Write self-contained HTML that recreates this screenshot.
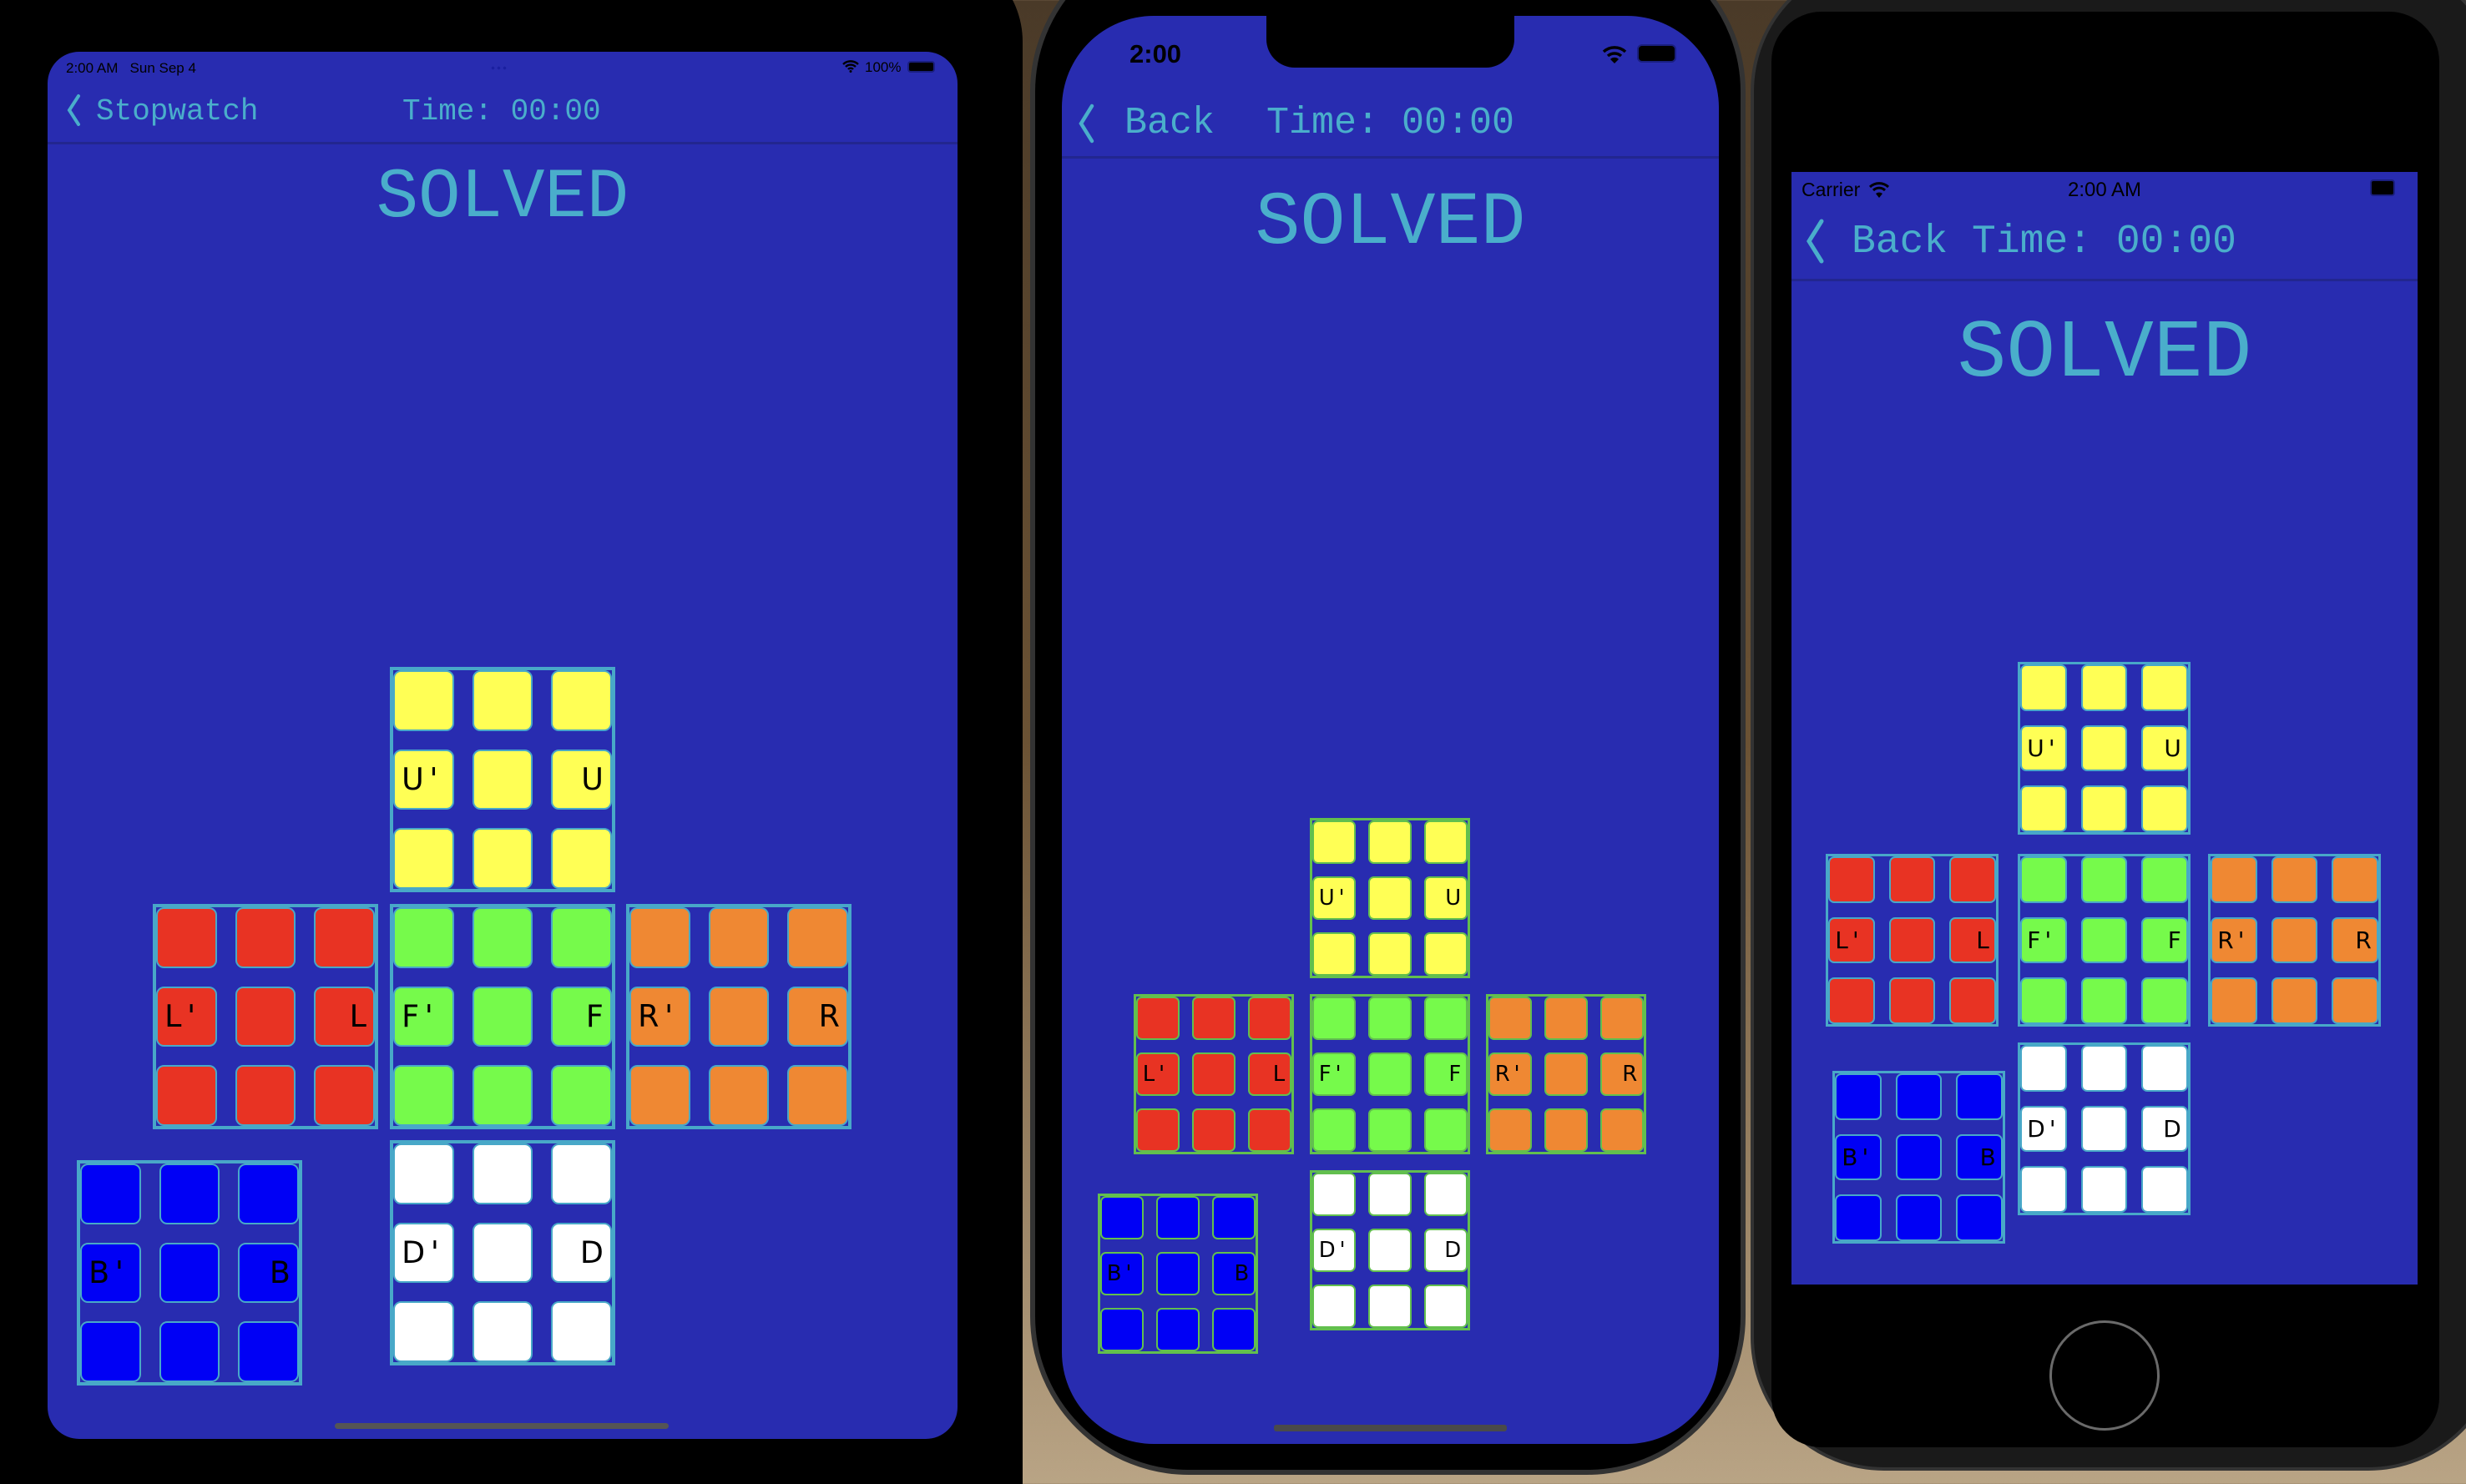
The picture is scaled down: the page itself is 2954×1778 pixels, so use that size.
<!DOCTYPE html>
<html style="overflow:hidden;width:2954px;height:1778px"><head><meta charset="utf-8"><style>
*{margin:0;padding:0;box-sizing:border-box}
body{width:2954px;height:1778px;overflow:hidden;position:relative;background:linear-gradient(180deg,#4a3a28 0%,#6b5234 50%,#b9a485 100%);font-family:"Liberation Sans",sans-serif}
.a{position:absolute}
.scr{position:absolute;background:#282cb0;overflow:hidden}
.m{font-family:"Liberation Mono",monospace;color:#4aaecb;position:absolute;white-space:pre;line-height:1}
.ln{position:absolute;left:0;right:0;height:3px;background:#22268f}
.f{position:absolute;width:var(--s);height:var(--s);border:calc(var(--s)*0.016) solid var(--b);display:grid;grid-template-columns:repeat(3,calc(var(--s)*0.27));grid-template-rows:repeat(3,calc(var(--s)*0.27));justify-content:space-between;align-content:space-between}
.f i{display:flex;align-items:center;background:var(--c);border:calc(var(--s)*0.011) solid var(--b);border-radius:calc(var(--s)*0.035);font-style:normal;font-family:"DejaVu Sans","Liberation Sans",sans-serif;font-size:calc(var(--s)*0.135);letter-spacing:calc(var(--s)*0.025);color:#000;padding:0 calc(var(--s)*0.03)}
.f i.r{justify-content:flex-end;letter-spacing:0}
.s{font-family:"Liberation Sans",sans-serif;color:#000;position:absolute;line-height:1}
</style></head><body>
<!-- iPad -->
<div class="a" style="left:-60px;top:-60px;width:1285px;height:1838px;background:#000;border-radius:0 110px 0 0"></div>
<div class="scr" style="left:57px;top:62px;width:1090px;height:1662px;border-radius:38px">
 <div class="s" style="left:22px;top:11px;font-size:17px">2:00 AM&nbsp;&nbsp;&nbsp;Sun Sep 4</div>
 <div class="a" style="left:530px;top:17px;width:20px;height:5px;background:radial-gradient(circle,#1a1fa0 40%,transparent 45%) 0 0/7px 5px"></div>
 <svg class="a" style="left:951px;top:9px" width="22" height="16" viewBox="0 0 22 16"><path d="M2 6a13 13 0 0 1 18 0M5 9a8.5 8.5 0 0 1 12 0M8 12a4 4 0 0 1 6 0" stroke="#000" stroke-width="2.4" fill="none"/><circle cx="11" cy="14.5" r="1.5"/></svg>
 <div class="s" style="left:979px;top:10px;font-size:17px">100%</div>
 <div class="a" style="left:1030px;top:11px;width:33px;height:14px;border:2px solid #1a1f80;border-radius:4px;background:#000"></div>
 <svg class="a" style="left:22px;top:50px" width="18" height="40"><path d="M15 3 4 20l11 17" stroke="#4aaecb" stroke-width="4" fill="none" stroke-linecap="round"/></svg>
 <div class="m" style="left:58px;top:54px;font-size:36px">Stopwatch</div>
 <div class="m" style="left:425px;top:54px;font-size:36px">Time: 00:00</div>
 <div class="ln" style="top:108px"></div>
 <div class="m" style="left:0;right:0;text-align:center;top:134px;font-size:84px">SOLVED</div>
 <div class="a" style="left:344px;top:1643px;width:400px;height:7px;background:#555;border-radius:4px"></div>
</div>
<!-- iPhone notch -->
<div class="a" style="left:1234px;top:-80px;width:857px;height:1847px;background:#000;border:6px solid #333;border-radius:190px"></div>
<div class="scr" style="left:1272px;top:19px;width:787px;height:1711px;border-radius:110px">
 <div class="s" style="left:81px;top:30px;font-size:31px;font-weight:bold">2:00</div>
 <div class="a" style="left:245px;top:0;width:297px;height:62px;background:#000;border-radius:0 0 34px 34px"></div>
 <svg class="a" style="left:646px;top:34px" width="32" height="24" viewBox="0 0 32 24"><path d="M3 9a19 19 0 0 1 26 0M8 14a12 12 0 0 1 16 0" stroke="#000" stroke-width="3.5" fill="none"/><path d="M11 18a7 7 0 0 1 10 0l-5 5z"/></svg>
 <div class="a" style="left:689px;top:34px;width:47px;height:22px;border:2px solid #1a1f80;border-radius:6px;background:#000"></div>
 <svg class="a" style="left:18px;top:104px" width="22" height="50"><path d="M18 4 5 25l13 21" stroke="#4aaecb" stroke-width="4.5" fill="none" stroke-linecap="round"/></svg>
 <div class="m" style="left:75px;top:106px;font-size:45px">Back</div>
 <div class="m" style="left:245px;top:106px;font-size:45px">Time: 00:00</div>
 <div class="ln" style="top:168px"></div>
 <div class="m" style="left:0;right:0;text-align:center;top:204px;font-size:90px">SOLVED</div>
 <div class="a" style="left:254px;top:1688px;width:279px;height:8px;background:#4a4a4a;border-radius:3px"></div>
</div>
<!-- iPhone 8 -->
<div class="a" style="left:2097px;top:-50px;width:900px;height:1812px;background:#1a1a1a;border:4px solid #333;border-radius:160px"></div>
<div class="a" style="left:2122px;top:14px;width:800px;height:1720px;background:#000;border-radius:60px"></div>
<div class="scr" style="left:2146px;top:206px;width:750px;height:1333px">
 <div class="s" style="left:12px;top:10px;font-size:23px">Carrier</div>
 <svg class="a" style="left:92px;top:10px" width="26" height="22" viewBox="0 0 26 22"><path d="M2 8a16 16 0 0 1 22 0M6 12a10 10 0 0 1 14 0" stroke="#000" stroke-width="3" fill="none"/><path d="M9 16a6 6 0 0 1 8 0l-4 5z"/></svg>
 <div class="s" style="left:0;right:0;text-align:center;top:10px;font-size:24px">2:00 AM</div>
 <div class="a" style="left:693px;top:9px;width:30px;height:20px;border:2px solid #1a1f80;border-radius:4px;background:#000"></div>
 <svg class="a" style="left:14px;top:55px" width="26" height="56"><path d="M22 4 7 28l15 24" stroke="#4aaecb" stroke-width="5" fill="none" stroke-linecap="round"/></svg>
 <div class="m" style="left:72px;top:60px;font-size:48px">Back Time: 00:00</div>
 <div class="ln" style="top:128px"></div>
 <div class="m" style="left:0;right:0;text-align:center;top:170px;font-size:98px">SOLVED</div>
</div>
<div class="a" style="left:2455px;top:1582px;width:132px;height:132px;border:3px solid #6a6a6a;border-radius:50%"></div>

<!-- iPad faces -->
<div class="f" style="left:467px;top:799px;--s:270px;--c:#ffff55;--b:#48a8c8"><i></i><i></i><i></i><i>U'</i><i></i><i class="r">U</i><i></i><i></i><i></i></div>
<div class="f" style="left:183px;top:1083px;--s:270px;--c:#e83323;--b:#48a8c8"><i></i><i></i><i></i><i>L'</i><i></i><i class="r">L</i><i></i><i></i><i></i></div>
<div class="f" style="left:467px;top:1083px;--s:270px;--c:#76fa4b;--b:#48a8c8"><i></i><i></i><i></i><i>F'</i><i></i><i class="r">F</i><i></i><i></i><i></i></div>
<div class="f" style="left:750px;top:1083px;--s:270px;--c:#ef8833;--b:#48a8c8"><i></i><i></i><i></i><i>R'</i><i></i><i class="r">R</i><i></i><i></i><i></i></div>
<div class="f" style="left:467px;top:1366px;--s:270px;--c:#ffffff;--b:#48a8c8"><i></i><i></i><i></i><i>D'</i><i></i><i class="r">D</i><i></i><i></i><i></i></div>
<div class="f" style="left:92px;top:1390px;--s:270px;--c:#0000f5;--b:#48a8c8"><i></i><i></i><i></i><i>B'</i><i></i><i class="r">B</i><i></i><i></i><i></i></div>
<!-- iPhone X faces -->
<div class="f" style="left:1569px;top:980px;--s:192px;--c:#ffff55;--b:#62bf4e"><i></i><i></i><i></i><i>U'</i><i></i><i class="r">U</i><i></i><i></i><i></i></div>
<div class="f" style="left:1358px;top:1191px;--s:192px;--c:#e83323;--b:#62bf4e"><i></i><i></i><i></i><i>L'</i><i></i><i class="r">L</i><i></i><i></i><i></i></div>
<div class="f" style="left:1569px;top:1191px;--s:192px;--c:#76fa4b;--b:#62bf4e"><i></i><i></i><i></i><i>F'</i><i></i><i class="r">F</i><i></i><i></i><i></i></div>
<div class="f" style="left:1780px;top:1191px;--s:192px;--c:#ef8833;--b:#62bf4e"><i></i><i></i><i></i><i>R'</i><i></i><i class="r">R</i><i></i><i></i><i></i></div>
<div class="f" style="left:1569px;top:1402px;--s:192px;--c:#ffffff;--b:#62bf4e"><i></i><i></i><i></i><i>D'</i><i></i><i class="r">D</i><i></i><i></i><i></i></div>
<div class="f" style="left:1315px;top:1430px;--s:192px;--c:#0000f5;--b:#62bf4e"><i></i><i></i><i></i><i>B'</i><i></i><i class="r">B</i><i></i><i></i><i></i></div>
<!-- iPhone 8 faces -->
<div class="f" style="left:2417px;top:793px;--s:207px;--c:#ffff55;--b:#48a8c8"><i></i><i></i><i></i><i>U'</i><i></i><i class="r">U</i><i></i><i></i><i></i></div>
<div class="f" style="left:2187px;top:1023px;--s:207px;--c:#e83323;--b:#48a8c8"><i></i><i></i><i></i><i>L'</i><i></i><i class="r">L</i><i></i><i></i><i></i></div>
<div class="f" style="left:2417px;top:1023px;--s:207px;--c:#76fa4b;--b:#48a8c8"><i></i><i></i><i></i><i>F'</i><i></i><i class="r">F</i><i></i><i></i><i></i></div>
<div class="f" style="left:2645px;top:1023px;--s:207px;--c:#ef8833;--b:#48a8c8"><i></i><i></i><i></i><i>R'</i><i></i><i class="r">R</i><i></i><i></i><i></i></div>
<div class="f" style="left:2417px;top:1249px;--s:207px;--c:#ffffff;--b:#48a8c8"><i></i><i></i><i></i><i>D'</i><i></i><i class="r">D</i><i></i><i></i><i></i></div>
<div class="f" style="left:2195px;top:1283px;--s:207px;--c:#0000f5;--b:#48a8c8"><i></i><i></i><i></i><i>B'</i><i></i><i class="r">B</i><i></i><i></i><i></i></div>
</body></html>
